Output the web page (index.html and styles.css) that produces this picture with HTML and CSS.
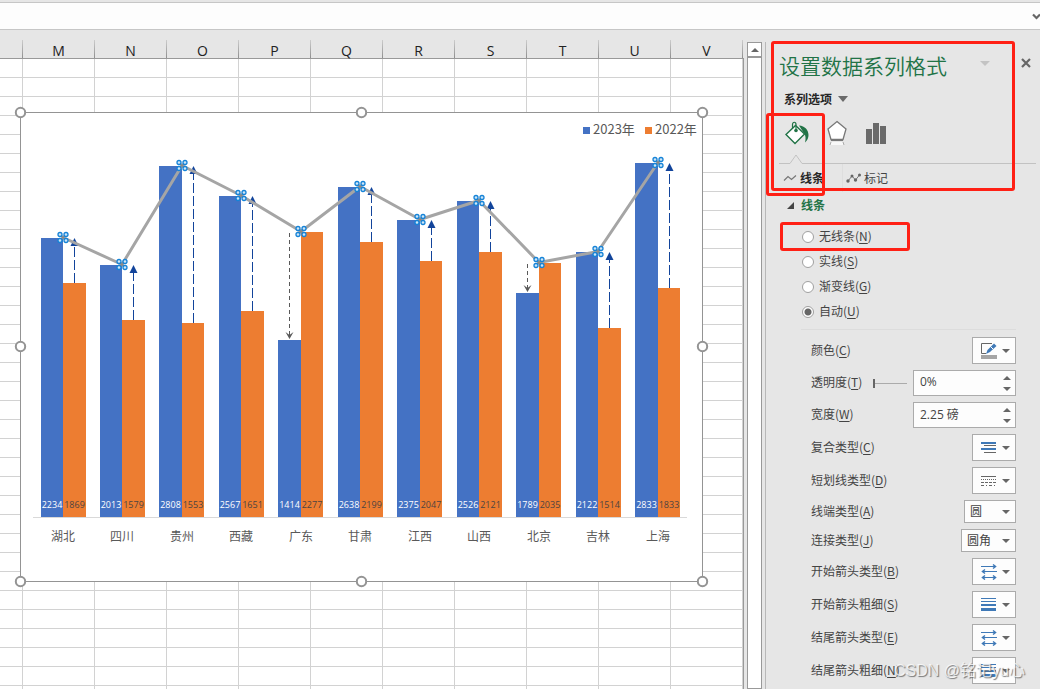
FILE: index.html
```html
<!DOCTYPE html>
<html lang="zh-CN">
<head>
<meta charset="utf-8">
<title>设置数据系列格式</title>
<link rel="stylesheet" href="styles.css">
</head>
<body>
<div class="app">
  <div class="formula-bar">
    <button class="plain expand" aria-label="展开编辑栏"><svg width="8" height="7" viewBox="0 0 8 7"><path d="M1 1.5 4.5 5 8 1.5" fill="none" stroke="#666" stroke-width="2.2"/></svg></button>
  </div>
  <div class="main">
    <section class="sheet">
      <div class="columns">
        <span class="col col-edge"></span><span class="col">M</span><span class="col">N</span><span class="col">O</span><span class="col">P</span><span class="col">Q</span><span class="col">R</span><span class="col">S</span><span class="col">T</span><span class="col">U</span><span class="col">V</span>
      </div>
      <div class="cells"></div>
      <svg class="chart" id="chart" width="696" height="484" viewBox="14 106 696 484" role="img" aria-label="2023年与2022年对比"></svg>
    </section>
    <div class="scrollbar">
      <button class="plain scroll-up" aria-label="向上滚动"><svg width="8" height="4" viewBox="0 0 8 4"><path d="M0 4 4 0 8 4z" fill="#666"/></svg></button>
      <div class="track"></div>
    </div>
    <aside class="pane">
      <header class="pane-head">
        <h1 class="title">设置数据系列格式</h1>
        <button class="plain" aria-label="任务窗格选项"><svg width="10" height="5" viewBox="0 0 10 5"><path d="M0 0h10L5 5z" fill="#c3c3c3"/></svg></button>
        <button class="plain close" aria-label="关闭"><svg width="10" height="10" viewBox="0 0 10 10"><path d="M1 1l8 8M9 1 1 9" stroke="#666" stroke-width="2.2"/></svg></button>
      </header>
      <button class="plain series">系列选项 <svg width="10" height="6" viewBox="0 0 10 6"><path d="M0 0h10L5 6z" fill="#6a6a6a"/></svg></button>
      <div class="tabs">
        <button class="plain" aria-label="填充与线条"><svg width="24" height="24" viewBox="0 0 24 24"><path d="M1 13.5 10.5 4.5 19.5 13 10 22.5z" fill="#fff" stroke="#217346" stroke-width="1.4"/><path d="M7.500 8V3.500C7.500.5 11 .5 11 3.500V9" fill="none" stroke="#217346" stroke-width="1.2"/><circle cx="11" cy="9.5" r="1.8" fill="#217346"/><path d="M14 4.500C20 5 23.500 9 23.500 14c0 3-1 5-3.500 7.500 1-4 .5-7-.5-8.500z" fill="#217346"/></svg></button>
        <button class="plain" aria-label="效果"><svg width="22" height="26" viewBox="0 0 22 26"><path d="M11 1.500 20 9 17 19.500H5L2 9z" fill="#fff" stroke="#777" stroke-width="1.300"/><path d="M5 19h12v2H5z" fill="#777"/><path d="M5 22h12l1 3H4z" fill="#f8f8f8"/><path d="M5 22l-1 3M17 22l1 3" stroke="#aaa"/></svg></button>
        <button class="plain" aria-label="系列选项"><svg width="21" height="22" viewBox="0 0 21 22"><path d="M1 7h6v15H1zM8 1h6v21H8zM15 4h6v18h-6z" fill="#6a6a6a"/></svg></button>
      </div>
      <div class="tab-rule"><svg width="24" height="10" viewBox="0 0 24 10"><path d="M11 9.500 17 1 23 9.500" fill="#e6e6e6" stroke="#c2c2c2"/><path d="M0 9.500h11" stroke="#c2c2c2"/></svg></div>
      <div class="subtabs">
        <button class="plain sub active"><svg width="14" height="8" viewBox="0 0 14 8"><path d="M1 6.500 5 2.500 8.500 5.500 13 1.500" fill="none" stroke="#777" stroke-width="1.200"/></svg>线条</button>
        <button class="plain sub mark"><svg width="15" height="10" viewBox="0 0 15 10"><path d="M2 8 6 3 9.500 7 13.500 2" fill="none" stroke="#777"/><g fill="#666"><circle cx="2" cy="8" r="1.700"/><circle cx="6" cy="3" r="1.500"/><circle cx="9.500" cy="7" r="1.700"/><circle cx="13.500" cy="2" r="1.500"/></g></svg>标记</button>
      </div>
      <h2 class="section"><svg width="7" height="7" viewBox="0 0 7 7"><path d="M7 0v7H0z" fill="#444"/></svg>线条</h2>
      <div class="radios">
        <label class="radio"><input type="radio" name="line"><span>无线条(<u>N</u>)</span></label>
        <label class="radio"><input type="radio" name="line"><span>实线(<u>S</u>)</span></label>
        <label class="radio"><input type="radio" name="line"><span>渐变线(<u>G</u>)</span></label>
        <label class="radio"><input type="radio" name="line" checked><span>自动(<u>U</u>)</span></label>
      </div>
      <div class="fields">
        <div class="row"><label for="color">颜色(<u>C</u>)</label>
          <button class="drop" id="color"><svg width="16" height="16" viewBox="0 0 16 16"><path d="M11 .5H.5v10H5" fill="none" stroke="#666"/><path d="M5 11l1.500-4L13 .5 15.500 3 9 9z" fill="#3f79b7"/><path d="M9.500 3.500 12.500 6.500" stroke="#fff"/><path d="M0 12h16v4H0z" fill="#a5a5a5"/></svg><i class="caret"></i></button></div>
        <div class="row"><label for="alpha">透明度(<u>T</u>)</label>
          <input class="slider" type="range" min="0" max="100" value="0" aria-label="透明度滑块">
          <span class="spin"><input id="alpha" type="text" value="0%"><span class="arrows"><button class="plain up" aria-label="增加透明度"></button><button class="plain down" aria-label="减少透明度"></button></span></span></div>
        <div class="row"><label for="width">宽度(<u>W</u>)</label>
          <span class="spin"><input id="width" type="text" value="2.25 磅"><span class="arrows"><button class="plain up" aria-label="增加宽度"></button><button class="plain down" aria-label="减少宽度"></button></span></span></div>
        <div class="row"><label for="compound">复合类型(<u>C</u>)</label>
          <button class="drop" id="compound"><svg width="16" height="12" viewBox="0 0 16 12"><path d="M0 0h15v2H0zM0 6h15v2H0z" fill="#3f79b7"/><path d="M3 3h12v1H3zM3 10h12v1H3z" fill="#666"/></svg><i class="caret"></i></button></div>
        <div class="row"><label for="dash">短划线类型(<u>D</u>)</label>
          <button class="drop" id="dash"><svg width="16" height="12" viewBox="0 0 16 12"><g stroke="#666"><path d="M0 1.500h15"/><path d="M0 4.500h15" stroke-dasharray="1 1"/><path d="M0 7.500h15" stroke-dasharray="3 1"/><path d="M0 10.500h15" stroke-dasharray="3 2 1 2"/></g></svg><i class="caret"></i></button></div>
        <div class="row"><label for="cap">线端类型(<u>A</u>)</label>
          <span class="pick"><select id="cap"><option>圆</option></select><i class="caret"></i></span></div>
        <div class="row"><label for="join">连接类型(<u>J</u>)</label>
          <span class="pick pick-wide"><select id="join"><option>圆角</option></select><i class="caret"></i></span></div>
        <div class="row"><label for="begin-type">开始箭头类型(<u>B</u>)</label>
          <button class="drop" id="begin-type"><svg width="16" height="17" viewBox="0 0 16 17"><g fill="none" stroke="#3f79b7"><path d="M0 3.500h15M1 8.500h15M1 14.500h14"/><path d="M12 1.500 14.500 3.500 12 5.500M4 6.500 1.500 8.500 4 10.500M4 12.500 1.500 14.500l2.500 2M12 12.500 14.500 14.500l-2.500 2" stroke-width="1.500"/></g></svg><i class="caret"></i></button></div>
        <div class="row"><label for="begin-size">开始箭头粗细(<u>S</u>)</label>
          <button class="drop" id="begin-size"><svg width="16" height="13" viewBox="0 0 16 13"><path d="M0 0h15v1H0zM0 3h15v1H0zM0 6h15v2H0zM0 10h15v3H0z" fill="#3f79b7"/></svg><i class="caret"></i></button></div>
        <div class="row"><label for="end-type">结尾箭头类型(<u>E</u>)</label>
          <button class="drop" id="end-type"><svg width="16" height="17" viewBox="0 0 16 17"><g fill="none" stroke="#3f79b7"><path d="M0 3.500h15M1 8.500h15M1 14.500h14"/><path d="M12 1.500 14.500 3.500 12 5.500M4 6.500 1.500 8.500 4 10.500M4 12.500 1.500 14.500l2.500 2M12 12.500 14.500 14.500l-2.500 2" stroke-width="1.500"/></g></svg><i class="caret"></i></button></div>
        <div class="row"><label for="end-size">结尾箭头粗细(<u>N</u>)</label>
          <button class="drop" id="end-size"><svg width="16" height="13" viewBox="0 0 16 13"><path d="M0 0h15v1H0zM0 3h15v1H0zM0 6h15v2H0zM0 10h15v3H0z" fill="#3f79b7"/></svg><i class="caret"></i></button></div>
      </div>
      <div class="callout callout-head"></div>
      <div class="callout callout-tab"></div>
      <div class="callout callout-none"></div>
      <div class="watermark">CSDN @铭记yu心</div>
    </aside>
  </div>
</div>
<script src="chart.js"></script>
</body>
</html>
```
FILE: styles.css
```css
* { box-sizing: border-box; }
body {
  margin: 0;
  font: 12px/16px "Noto Sans CJK SC", "Noto Sans", sans-serif;
  color: #444;
  background: #e6e6e6;
}
.app { display: flex; flex-direction: column; height: 100vh; overflow: hidden; }
.plain { border: 0; padding: 0; background: none; font: inherit; color: inherit; display: flex; align-items: center; }
svg { display: block; flex: none; }
u { text-underline-offset: 2px; }

.formula-bar {
  flex: none;
  display: flex;
  justify-content: flex-end;
  margin-top: 2px;
  height: 28px;
  background: #fdfdfd;
  border: solid #c6c6c6;
  border-width: 1px 0;
}

.main { flex: 1; min-height: 0; display: flex; }

/* Worksheet */
.sheet { flex: 1; min-width: 0; position: relative; overflow: hidden; display: flex; flex-direction: column; }
.columns { flex: none; display: flex; height: 29px; padding-top: 10px; border-bottom: 1px solid #999; background: #e6e6e6; }
.col {
  flex: none;
  width: 72px;
  text-align: center;
  font: 14px/22px "Open Sans", "Noto Sans", sans-serif;
  color: #222;
  border-right: 1px solid;
  border-image: linear-gradient(#d0d0d0, #8c8c8c) 1;
}
.col-edge { width: 23px; }
.cells {
  flex: 1;
  border-right: 1px solid #999;
  background-color: #fff;
  background-image:
    repeating-linear-gradient(to bottom, transparent 0 18px, #d2d2d2 18px 19px),
    repeating-linear-gradient(to right, #d2d2d2 0 1px, transparent 1px 72px);
  background-position: 0 0, 22px 0;
}
.chart { position: absolute; left: 14px; top: 76px; }
.axis-label { font: 12px "Noto Sans CJK SC", sans-serif; fill: #595959; text-anchor: middle; }
.legend { font: 13px "Noto Sans CJK SC", sans-serif; fill: #595959; }
.value { font: 9px "Open Sans", "Noto Sans", sans-serif; text-anchor: middle; }
.value-new { fill: #fff; }
.value-old { fill: #4d4440; }

.scrollbar { flex: none; width: 15px; margin: 12px 3px 0; display: flex; flex-direction: column; }
.scroll-up { height: 15px; justify-content: center; background: #fff; border: 1px solid #999; }
.track { flex: 1; background: #fff; border: 1px solid #999; }

/* Format pane */
.pane { flex: none; width: 275px; margin-top: 12px; position: relative; border-left: 1px solid #b8b8b8; padding: 8px 24px 0 13px; }
.pane-head { display: flex; align-items: center; justify-content: space-between; height: 34px; margin-right: -15px; }
.title { margin: 0; flex: none; width: 201px; padding-bottom: 4px; font-size: 21px; line-height: 30px; font-weight: 350; color: #217346; }
.close { margin-left: 31px; }
.pane-head .plain { margin-bottom: 8px; }
.series { height: 32px; gap: 6px; padding: 0 0 2px 5px; font-weight: 700; color: #262626; }
.tabs { display: flex; align-items: center; gap: 17px; height: 34px; padding-left: 6px; }
.tab-rule { height: 14px; padding-top: 4px; display: flex; margin-right: -20px; }
.tab-rule::after { content: ""; flex: 1; border-bottom: 1px solid #c2c2c2; margin-left: -1px; }
.subtabs { display: flex; height: 28px; padding-left: 4px; }
.sub { gap: 3px; }
.active { font-weight: 700; color: #262626; width: 60px; border-right: 1px solid #dedede; }
.mark { padding-left: 3px; }
.section { display: flex; align-items: center; gap: 7px; margin: 0; height: 28px; padding: 0 0 2px 8px; font-size: 12px; font-weight: 700; color: #217346; }
.radios { margin-left: 22px; padding: 4px 0 5px; border-bottom: 1px solid #dcdcdc; }
.radio { display: flex; align-items: center; height: 25px; gap: 5px; }
.radio span, .row label { padding-bottom: 2px; }
.radio input {
  appearance: none;
  width: 12px;
  height: 12px;
  margin: 0 0 0 1px;
  border: 1px solid #a0a0a0;
  border-radius: 50%;
  background: #fff;
}
.radio input:checked { background: radial-gradient(circle, #666 0 3px, #fff 4px); }
.fields { display: flex; flex-direction: column; gap: 6px; padding: 7px 0 5px 32px; }
.row { display: flex; align-items: center; justify-content: space-between; }
.drop { display: flex; align-items: center; justify-content: space-between; width: 44px; height: 27px; padding: 0 5px 0 8px; background: #fdfdfd; border: 1px solid #ababab; }
.caret { flex: none; width: 0; border: solid transparent; border-width: 4px 4px 0; border-top-color: #666; }
.slider { appearance: none; width: 34px; height: 12px; margin: 0 -4px 0 0; background: linear-gradient(#ababab, #ababab) center / 100% 1px no-repeat; }
.slider::-webkit-slider-thumb { appearance: none; width: 2px; height: 9px; background: #666; }
.spin { display: flex; width: 103px; height: 26px; background: #fdfdfd; border: 1px solid #ababab; }
.spin input { flex: 1; min-width: 0; border: 0; padding: 0 6px 3px; background: none; font: 12px "Open Sans", "Noto Sans CJK SC", sans-serif; color: #444; }
.arrows { display: flex; flex-direction: column; justify-content: center; gap: 7px; padding-right: 4px; }
.up, .down { border: solid transparent; border-width: 0 4px 4px; border-bottom-color: #666; }
.down { border-width: 4px 4px 0; border-top-color: #666; }
.pick { display: flex; align-items: center; width: 52px; height: 23px; padding-right: 5px; background: #fdfdfd; border: 1px solid #ababab; }
.pick-wide { width: 55px; }
.pick select { appearance: none; flex: 1; min-width: 0; border: 0; padding: 0 0 2px 5px; background: none; font: inherit; color: #444; }

/* Annotations laid over the pane */
.callout { position: absolute; border: 3px solid #ff2015; border-radius: 3px; pointer-events: none; }
.callout-head { left: 5px; top: -1px; width: 244px; height: 150px; }
.callout-tab { left: 0; top: 71px; width: 59px; height: 83px; }
.callout-none { left: 14px; top: 180px; width: 130px; height: 29px; }
.watermark {
  position: absolute;
  right: 15px;
  top: 617px;
  font: 16px/24px "Liberation Sans", "Noto Sans CJK SC", sans-serif;
  white-space: nowrap;
  color: rgba(255, 255, 255, 0.75);
  text-shadow: 1px 1px 1px rgba(90, 90, 90, 0.8);
}
```
FILE: chart.js
```js
const data = [
  ["湖北", 2234, 1869], ["四川", 2013, 1579], ["贵州", 2808, 1553], ["西藏", 2567, 1651],
  ["广东", 1414, 2277], ["甘肃", 2638, 2199], ["江西", 2375, 2047], ["山西", 2526, 2121],
  ["北京", 1789, 2035], ["吉林", 2122, 1514], ["上海", 2833, 1833]
];
const BASE = 517;
const FIRST = 63;
const STEP = 59.45;
const BAR = 22.5;
const barTop = v => Math.round(BASE - v / 8);

let bars = "", arrows = "", labels = "", marks = "";
const points = [];

data.forEach(([name, now, before], i) => {
  const mid = Math.round(FIRST + i * STEP);
  const left = Math.round(FIRST + i * STEP - BAR);
  const right = Math.round(FIRST + i * STEP + BAR);
  const a = barTop(now), b = barTop(before);
  bars += `<path d="M${left} ${a}H${mid}V${BASE}H${left}z" fill="#4472c4"/><path d="M${mid} ${b}H${right}V${BASE}H${mid}z" fill="#ed7d31"/>`;
  if (now > before) {
    const x = mid + 11.5;
    arrows += `<path d="M${x} ${b}V${a + 7}" stroke="#12449b" stroke-dasharray="10 3"/><path d="M${x - 4} ${a + 8}L${x} ${a}L${x + 4} ${a + 8}z" fill="#12449b"/>`;
  } else {
    const x = mid - 11.5;
    arrows += `<path d="M${x} ${b + 1}V${a - 4}" stroke="#595959" stroke-dasharray="4 3"/><path d="M${x - 4} ${a - 8}L${x} ${a - 1}L${x + 4} ${a - 8}L${x} ${a - 5}z" fill="#595959"/>`;
  }
  const y = Math.min(a, b) - 0.5;
  points.push(`${mid},${y}`);
  marks += `<path d="M${mid - 3} ${y - 3}l6 6m0-6l-6 6" stroke="#8c8c8c" stroke-width="2"/>`;
  for (const dx of [-3, 3]) for (const dy of [-3, 3])
    marks += `<circle cx="${mid + dx}" cy="${y + dy}" r="2"/>`;
  labels += `<text class="value value-new" x="${(left + mid) / 2}" y="508">${now}</text>` +
    `<text class="value value-old" x="${(right + mid) / 2}" y="508">${before}</text>` +
    `<text class="axis-label" x="${mid}" y="541">${name}</text>`;
});

const handles = [[20.5, 112.5], [361.5, 112.5], [702.5, 112.5], [20.5, 346.5], [702.5, 346.5], [20.5, 581.5], [361.5, 581.5], [702.5, 581.5]]
  .map(([x, y]) => `<circle cx="${x}" cy="${y}" r="4.700"/>`).join("");

document.getElementById("chart").innerHTML =
  `<path d="M20.500 112.500H702.500V581.500H20.500z" fill="#fff" stroke="#949494"/>
  <path d="M33 517.500H687" stroke="#d9d9d9"/>
  ${bars}${arrows}
  <polyline points="${points.join(" ")}" fill="none" stroke="#a5a5a5" stroke-width="3" stroke-linejoin="round" stroke-linecap="round"/>
  <g fill="#cfe6f7" stroke="#1583d7" stroke-width="1.300">${marks}</g>
  ${labels}
  <path d="M583 127h7v7h-7z" fill="#4472c4"/><text class="legend" x="593" y="134">2023年</text>
  <path d="M645 127h7v7h-7z" fill="#ed7d31"/><text class="legend" x="655" y="134">2022年</text>
  <g fill="#fff" stroke="#949494" stroke-width="2">${handles}</g>`;
```
